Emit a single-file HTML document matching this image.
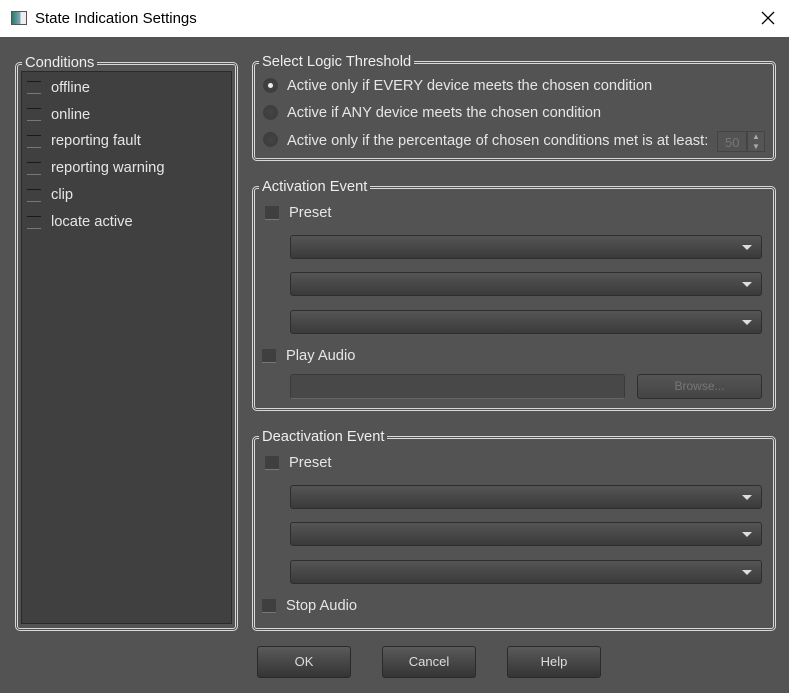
<!DOCTYPE html>
<html><head><style>
*{margin:0;padding:0;box-sizing:border-box}
body{width:789px;height:693px;background:#535353;font-family:"Liberation Sans",sans-serif;font-size:14.7px;color:#e6e6e6;position:relative;overflow:hidden}
.a{position:absolute}
.title{left:0;top:0;width:789px;height:37px;background:#fff;color:#000;font-size:15px}
.grp{border:3px double #d8d8d8;border-radius:5px}
.lg{background:#535353;padding:0 3px;top:-10px;left:4px;font-size:14.7px;line-height:16px;color:#eee}
.combo{background:linear-gradient(#555,#3a3a3a);border:1px solid #2e2e2e;border-radius:3px;height:24px;left:290px;width:472px}
.combo:after{content:"";position:absolute;right:9px;top:9px;border-left:5px solid transparent;border-right:5px solid transparent;border-top:5px solid #ddd}
.cb{width:14px;height:14px;background:#3f3f3f;border-bottom:1px solid #777}
.btn{background:linear-gradient(#5a5a5a,#343434);border:1px solid #2a2a2a;border-radius:3px;height:32px;width:94px;top:646px;text-align:center;line-height:30px;font-size:13px;color:#ddd}
.rad{width:15px;height:15px;border-radius:50%;background:radial-gradient(#444,#3a3a3a);left:263px}
.cond{left:51px}
.cm{left:27px;width:14px;height:13px;border-top:1px solid #1a1a1a;border-bottom:1px solid #777}
</style></head><body>
<div class="a title"><div class="a" style="left:11px;top:11px;width:16px;height:14px;border:1px solid #555;background:linear-gradient(90deg,#2a7a6a,#8ab 60%,#eee 60%)"></div><div class="a" style="left:35px;top:10px">State Indication Settings</div>
<svg class="a" style="left:761px;top:11px" width="14" height="14"><path d="M1 1L13 13M13 1L1 13" stroke="#000" stroke-width="1.3"/></svg></div>

<div class="a grp" style="left:15px;top:62px;width:223px;height:569px"><div class="a lg">Conditions</div></div>
<div class="a" style="left:21px;top:71px;width:211px;height:553px;background:#404040;border:1px solid #2a2a2a"></div>
<div class="a cm" style="top:81px"></div><div class="a cond" style="top:80px">offline</div>
<div class="a cm" style="top:108px"></div><div class="a cond" style="top:107px">online</div>
<div class="a cm" style="top:135px"></div><div class="a cond" style="top:133px">reporting fault</div>
<div class="a cm" style="top:162px"></div><div class="a cond" style="top:160px">reporting warning</div>
<div class="a cm" style="top:189px"></div><div class="a cond" style="top:187px">clip</div>
<div class="a cm" style="top:216px"></div><div class="a cond" style="top:214px">locate active</div>

<div class="a grp" style="left:252px;top:61px;width:524px;height:100px"><div class="a lg">Select Logic Threshold</div></div>
<div class="a rad" style="top:78px"><div class="a" style="left:5px;top:5px;width:5px;height:5px;border-radius:50%;background:#eee"></div></div>
<div class="a" style="left:287px;top:78px">Active only if EVERY device meets the chosen condition</div>
<div class="a rad" style="top:105px"></div>
<div class="a" style="left:287px;top:105px">Active if ANY device meets the chosen condition</div>
<div class="a rad" style="top:132px"></div>
<div class="a" style="left:287px;top:133px">Active only if the percentage of chosen conditions met is at least:</div>
<div class="a" style="left:717px;top:131px;width:30px;height:21px;border:1px solid #444;color:#777;font-size:13px;line-height:21px;padding-left:7px">50</div>
<div class="a" style="left:747px;top:131px;width:18px;height:21px;background:#555;border:1px solid #444;color:#aaa;font-size:8px;line-height:10px;text-align:center">▲<br>▼</div>

<div class="a grp" style="left:252px;top:186px;width:524px;height:225px"><div class="a lg">Activation Event</div></div>
<div class="a cb" style="left:265px;top:206px"></div><div class="a" style="left:289px;top:205px">Preset</div>
<div class="a combo" style="top:235px"></div>
<div class="a combo" style="top:272px"></div>
<div class="a combo" style="top:310px"></div>
<div class="a cb" style="left:262px;top:349px"></div><div class="a" style="left:286px;top:348px">Play Audio</div>
<div class="a" style="left:290px;top:374px;width:335px;height:25px;background:#484848;border:1px solid #3a3a3a;border-bottom-color:#666;border-radius:3px"></div>
<div class="a" style="left:637px;top:374px;width:125px;height:25px;background:linear-gradient(#555,#444);border:1px solid #2e2e2e;border-radius:3px;color:#777;font-size:12px;text-align:center;line-height:23px">Browse...</div>

<div class="a grp" style="left:252px;top:436px;width:524px;height:195px"><div class="a lg">Deactivation Event</div></div>
<div class="a cb" style="left:265px;top:456px"></div><div class="a" style="left:289px;top:455px">Preset</div>
<div class="a combo" style="top:485px"></div>
<div class="a combo" style="top:522px"></div>
<div class="a combo" style="top:560px"></div>
<div class="a cb" style="left:262px;top:599px"></div><div class="a" style="left:286px;top:598px">Stop Audio</div>

<div class="a btn" style="left:257px">OK</div>
<div class="a btn" style="left:382px">Cancel</div>
<div class="a btn" style="left:507px">Help</div>
</body></html>
